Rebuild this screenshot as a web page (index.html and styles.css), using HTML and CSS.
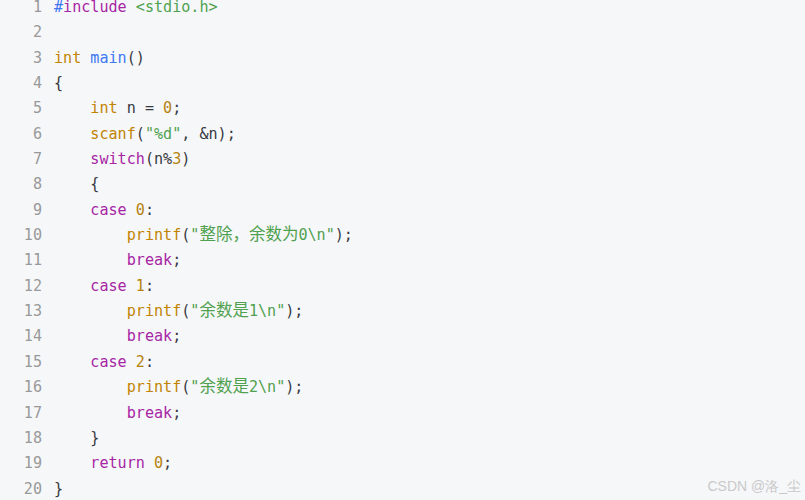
FILE: index.html
```html
<!DOCTYPE html>
<html>
<head>
<meta charset="utf-8">
<link rel="stylesheet" href="styles.css">
</head>
<body>
<div class="code">
<div class="nums">
<div>1</div><div>2</div><div>3</div><div>4</div><div>5</div><div>6</div><div>7</div><div>8</div><div>9</div><div>10</div><div>11</div><div>12</div><div>13</div><div>14</div><div>15</div><div>16</div><div>17</div><div>18</div><div>19</div><div>20</div>
</div>
<pre class="src"><span class="meta">#</span><span class="kw">include</span> <span class="str">&lt;stdio.h&gt;</span>

<span class="bi">int</span> <span class="ti">main</span>()
{
    <span class="bi">int</span> n = <span class="num">0</span>;
    <span class="bi">scanf</span>(<span class="str">"%d"</span>, &amp;n);
    <span class="kw">switch</span>(n%<span class="num">3</span>)
    {
    <span class="kw">case</span> <span class="num">0</span>:
        <span class="bi">printf</span>(<span class="str">"<span class="cjk">整除，余数为</span>0\n"</span>);
        <span class="kw">break</span>;
    <span class="kw">case</span> <span class="num">1</span>:
        <span class="bi">printf</span>(<span class="str">"<span class="cjk">余数是</span>1\n"</span>);
        <span class="kw">break</span>;
    <span class="kw">case</span> <span class="num">2</span>:
        <span class="bi">printf</span>(<span class="str">"<span class="cjk">余数是</span>2\n"</span>);
        <span class="kw">break</span>;
    }
    <span class="kw">return</span> <span class="num">0</span>;
}</pre>
</div>
<div class="mark">CSDN @洛_尘</div>
</body>
</html>
```
FILE: styles.css
```css
html, body {
  margin: 0;
  padding: 0;
  background: #f6f7f9;
  height: 500px;
  overflow: hidden;
}
body {
  position: relative;
}
.code {
  display: flex;
  gap: 12px;
  margin-top: -5px;
  font-family: "DejaVu Sans Mono", "Noto Sans CJK SC", monospace;
  font-size: 15.1px;
  line-height: 25.35px;
  color: #383a42;
}
.nums {
  width: 42px;
  text-align: right;
  color: #999999;
}
.src {
  margin: 0;
  font: inherit;
  line-height: 25.35px;
}
.cjk {
  font-family: "Noto Sans CJK SC", sans-serif;
  font-size: 16.5px;
  line-height: 1;
}
.meta { color: #4078f2; }
.kw { color: #a626a4; }
.str { color: #50a14f; }
.bi { color: #c18401; }
.ti { color: #4078f2; }
.num { color: #b5820f; }
.mark {
  position: absolute;
  right: 4px;
  bottom: 4px;
  font-family: "Liberation Sans", sans-serif;
  font-size: 14px;
  color: #c9c9c9;
}
```
